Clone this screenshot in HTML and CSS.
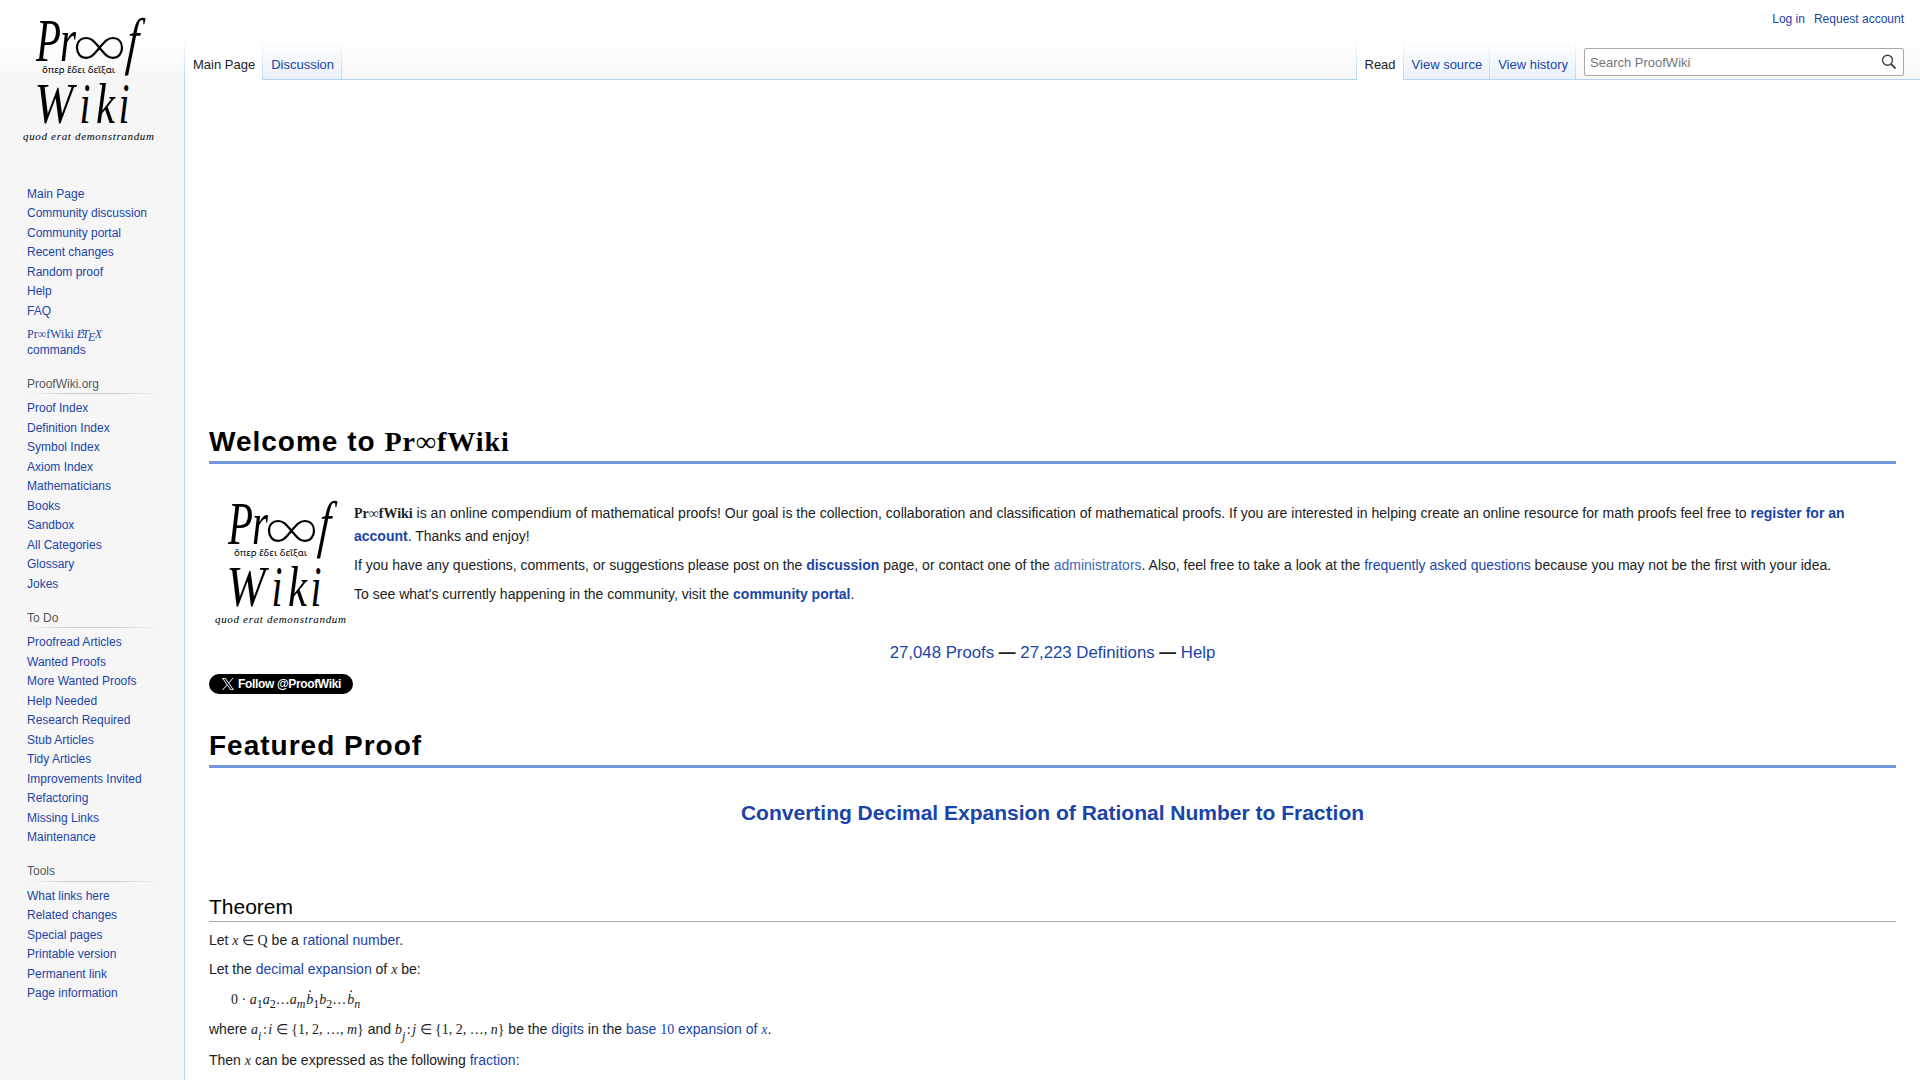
FILE: index.html
```html
<!DOCTYPE html>
<html lang="en">
<head>
<meta charset="utf-8">
<title>ProofWiki</title>
<link rel="stylesheet" href="styles.css">
</head>
<body>
<svg class="defs" aria-hidden="true">
  <symbol id="logo" overflow="visible">
    <g class="logo-serif">
      <text x="36" y="60.5" font-size="61" textLength="25" lengthAdjust="spacingAndGlyphs">P</text>
      <text x="60" y="60.5" font-size="61" textLength="16" lengthAdjust="spacingAndGlyphs">r</text>
      <text transform="translate(125.500 62) skewX(-5)" font-size="63" textLength="11.500" lengthAdjust="spacingAndGlyphs">f</text>
      <text x="34.500" y="123" font-size="58" textLength="39" lengthAdjust="spacingAndGlyphs">W</text>
      <text x="79.500" y="123" font-size="58" textLength="11" lengthAdjust="spacingAndGlyphs">i</text>
      <text x="96" y="123" font-size="58" textLength="19" lengthAdjust="spacingAndGlyphs">k</text>
      <text x="118.500" y="123" font-size="58" textLength="11" lengthAdjust="spacingAndGlyphs">i</text>
    </g>
    <path d="M99.5 47.8C94 41 91 38 86.500 38C80.500 38 77 42 77 47.800C77 53.500 80.500 57.800 86.500 57.800C91 57.800 94 54.500 99.500 47.800C105 41 108 38 112.500 38C118.500 38 122 42 122 47.800C122 53.500 118.500 57.800 112.500 57.800C108 57.800 105 54.500 99.500 47.800Z" fill="none" stroke="#000" stroke-width="2.2"/>
    <text class="logo-greek" x="42" y="73" font-size="9.800" textLength="73" lengthAdjust="spacingAndGlyphs">ὅπερ ἔδει δεῖξαι</text>
    <text class="logo-motto" x="23" y="140" font-size="11" textLength="131">quod erat demonstrandum</text>
  </symbol>
</svg>
<div class="page">
  <aside class="sidebar">
    <a class="logo"><svg width="160" height="160" viewBox="8 0 160 160"><use href="#logo"/></svg></a>
    <nav>
      <ul>
        <li><a>Main Page</a></li><li><a>Community discussion</a></li><li><a>Community portal</a></li><li><a>Recent changes</a></li><li><a>Random proof</a></li><li><a>Help</a></li><li><a>FAQ</a></li>
        <li class="latex"><a><span class="math">Pr∞fWiki <i>L<span class="la">A</span><span class="te">T</span><span class="ex">E</span><span class="xx">X</span></i></span><br>commands</a></li>
      </ul>
      <h3>ProofWiki.org</h3>
      <ul>
        <li><a>Proof Index</a></li><li><a>Definition Index</a></li><li><a>Symbol Index</a></li><li><a>Axiom Index</a></li><li><a>Mathematicians</a></li><li><a>Books</a></li><li><a>Sandbox</a></li><li><a>All Categories</a></li><li><a>Glossary</a></li><li><a>Jokes</a></li>
      </ul>
      <h3>To Do</h3>
      <ul>
        <li><a>Proofread Articles</a></li><li><a>Wanted Proofs</a></li><li><a>More Wanted Proofs</a></li><li><a>Help Needed</a></li><li><a>Research Required</a></li><li><a>Stub Articles</a></li><li><a>Tidy Articles</a></li><li><a>Improvements Invited</a></li><li><a>Refactoring</a></li><li><a>Missing Links</a></li><li><a>Maintenance</a></li>
      </ul>
      <h3 class="tools">Tools</h3>
      <ul>
        <li><a>What links here</a></li><li><a>Related changes</a></li><li><a>Special pages</a></li><li><a>Printable version</a></li><li><a>Permanent link</a></li><li><a>Page information</a></li>
      </ul>
    </nav>
  </aside>
  <div class="main">
    <header>
      <div class="personal"><a>Log in</a><a>Request account</a></div>
      <div class="bar">
        <div class="tabs"><a class="tab active">Main Page</a><a class="tab">Discussion</a></div>
        <div class="fill"></div>
        <div class="tabs right"><a class="tab active">Read</a><a class="tab">View source</a><a class="tab">View history</a></div>
        <div class="searchwrap">
          <div class="search"><span>Search ProofWiki</span>
            <svg width="16" height="16" viewBox="0 0 16 16" fill="none" stroke="#404244"><circle cx="6.500" cy="6.300" r="5" stroke-width="1.400"/><path d="M10 10l4.500 4.500" stroke-width="1.800"/></svg>
          </div>
        </div>
      </div>
    </header>
    <main>
      <h1>Welcome to <span class="math">Pr∞fWiki</span></h1>
      <section class="intro">
        <svg width="140" height="140" viewBox="17 10 140 140"><use href="#logo"/></svg>
        <div class="text">
          <p><b class="math">Pr∞fWiki</b> is an online compendium of mathematical proofs! Our goal is the collection, collaboration and classification of mathematical proofs. If you are interested in helping create an online resource for math proofs feel free to <a><b>register for an account</b></a>. Thanks and enjoy!</p>
          <p>If you have any questions, comments, or suggestions please post on the <a><b>discussion</b></a> page, or contact one of the <a class="external">administrators</a>. Also, feel free to take a look at the <a>frequently asked questions</a> because you may not be the first with your idea.</p>
          <p>To see what's currently happening in the community, visit the <a><b>community portal</b></a>.</p>
        </div>
      </section>
      <div class="counts"><a>27,048 Proofs</a> <b>—</b> <a>27,223 Definitions</a> <b>—</b> <a>Help</a></div>
      <a class="follow"><svg width="12" height="12" viewBox="0 0 24 24" fill="#fff"><path fill-rule="evenodd" d="M14.300 10.200L23.200 0h-2.100l-7.700 8.800L7.200 0H0l9.300 13.400L0 24h2.100l8.200-9.400 6.500 9.400H24zM2.900 1.600h3.200L21.100 22.500h-3.200z"/></svg><span>Follow @ProofWiki</span></a>
      <h1 class="featured">Featured Proof</h1>
      <div class="proof"><a>Converting Decimal Expansion of Rational Number to Fraction</a></div>
      <h2>Theorem</h2>
      <p class="l1">Let <span class="math"><i>x</i> ∈ Q</span> be a <a>rational number</a>.</p>
      <p class="l1">Let the <a>decimal expansion</a> of <i class="math">x</i> be:</p>
      <p class="l1 formula math">0 · <i>a</i><sub>1</sub><i>a</i><sub>2</sub>…<i>a</i><sub><i>m</i></sub><i class="dot">b</i><sub>1</sub><i>b</i><sub>2</sub>…<i class="dot">b</i><sub><i>n</i></sub></p>
      <p class="l1 where">where <span class="math"><i>a</i><sub class="low"><i>i</i></sub><span class="colon">:</span><i>i</i> ∈ {1, 2, …, <i>m</i>}</span> and <span class="math"><i>b</i><sub class="low"><i>j</i></sub><span class="colon">:</span><i>j</i> ∈ {1, 2, …, <i>n</i>}</span> be the <a>digits</a> in the <a>base <span class="math">10</span> expansion of <i class="math">x</i></a>.</p>
      <p class="l1">Then <i class="math">x</i> can be expressed as the following <a>fraction</a>:</p>
    </main>
  </div>
</div>
</body>
</html>
```
FILE: styles.css
```css
* { box-sizing: border-box; }
body { margin: 0; height: 1080px; overflow: hidden; background: #fff; color: #202122; font-family: "Liberation Sans", Arial, sans-serif; font-size: 14px; }
a { color: #1a44a9; text-decoration: none; }
.external { color: #3c66b6; }
.defs { position: absolute; width: 0; height: 0; }
.math { font-family: "Liberation Serif", "Times New Roman", serif; }
.logo-serif { font-family: "Liberation Serif", serif; font-style: italic; }
.logo-greek { font-family: "Noto Sans", sans-serif; }
.logo-motto { font-family: "Liberation Serif", serif; font-style: italic; }
.page { display: flex; height: 1080px; }

.sidebar { width: 184px; flex: none; padding-left: 8px; background: linear-gradient(#fff 40px, #f6f6f6 80px); }
.logo { display: block; height: 184.8px; }
.logo svg { overflow: visible; }
nav { padding-left: 19px; font-size: 12px; line-height: 13.5px; }
ul { list-style: none; margin: 0; padding: 0; }
li { height: 19.5px; padding: 3px 0; white-space: nowrap; }
.latex { height: 38.8px; padding-top: 4.4px; line-height: 16.5px; }
.la { font-size: 8px; margin-left: -4px; vertical-align: 3px; line-height: 0; }
.te { margin-left: -2px; }
.ex { margin-left: -1px; vertical-align: -3px; line-height: 0; }
.xx { margin-left: -0.5px; }
h3 { width: 132px; height: 39px; margin: 0; padding-top: 18.2px; font-size: 12px; font-weight: normal; color: #54595d; background: linear-gradient(to right, rgba(200,204,209,0), #c8ccd1 33%, #c8ccd1 66%, rgba(200,204,209,0)) 0 33px / 100% 1px no-repeat; }
.tools { padding-top: 17.8px; }

.main { flex: 1; min-width: 0; display: flex; flex-direction: column; }
header { height: 80px; }
.personal { height: 40px; display: flex; justify-content: flex-end; gap: 9px; padding: 12px 16px 0 0; font-size: 12px; line-height: 14px; }
.bar { height: 40px; display: flex; background: linear-gradient(#fff, #f6f6f6); }
.tabs { display: flex; padding-left: 1px; background: linear-gradient(#fff, #b3d5f3) 0 0 / 1px 100% no-repeat; }
.tab { height: 40px; padding: 17px 7px 0 8px; font-size: 13px; line-height: 15px; border-right: 1px solid; border-image: linear-gradient(#fff, #b3d5f3) 1; background: linear-gradient(#b3d5f3, #b3d5f3) 0 100% / 100% 1px no-repeat, linear-gradient(#fff, #e9f1f8); }
.tab.active { color: #202122; background: #fff; }
.fill { flex: 1; border-bottom: 1px solid #b3d5f3; }
.searchwrap { width: 344px; padding: 8px 16px 0 8px; border-bottom: 1px solid #b3d5f3; }
.search { height: 28px; display: flex; align-items: center; justify-content: space-between; padding: 0 6px 0 5px; background: #fff; border: 1px solid #a2a9b1; border-radius: 2px; font-size: 13px; color: #72777d; }

main { flex: 1; border-left: 1px solid #b3d5f3; padding: 341px 24px 0; }
h1 { margin: 0; height: 43px; line-height: 42px; font-size: 28px; letter-spacing: 1px; color: #000; border-bottom: 3px solid #7396dc; white-space: nowrap; }
.intro { display: flex; gap: 5px; height: 146px; margin-top: 29px; }
.intro svg { flex: none; overflow: visible; }
.text { padding-top: 8.6px; }
p { margin: 0 0 7px; line-height: 22.4px; }
.text p { line-height: 22.1px; }
.counts { text-align: center; font-size: 16.8px; line-height: 27px; }
.follow { display: flex; align-items: center; width: 144px; height: 20px; margin-top: 8px; padding-left: 13px; gap: 4px; border-radius: 10px; background: #000; color: #fff; font-size: 12px; letter-spacing: -0.35px; font-weight: bold; white-space: nowrap; }
.featured { margin-top: 31px; }
.proof { margin-top: 30px; text-align: center; font-size: 21px; font-weight: bold; line-height: 30px; }
h2 { margin: 64px 0 7px; font-size: 21px; line-height: 29px; font-weight: normal; color: #000; border-bottom: 1px solid #a2a9b1; }
.l1 { height: 22.4px; white-space: nowrap; }
.formula { padding: 1px 0 0 22px; margin-bottom: 8px; }
.where { margin-bottom: 8px; }
sub { font-size: 12px; line-height: 0; vertical-align: -4px; }
.low { vertical-align: -6px; }
.colon { margin: 0 1.5px; }
.dot { position: relative; margin-left: 1px; }
.dot::before { content: "."; position: absolute; left: 2px; top: -12px; font-style: normal; line-height: 16px; }
```
